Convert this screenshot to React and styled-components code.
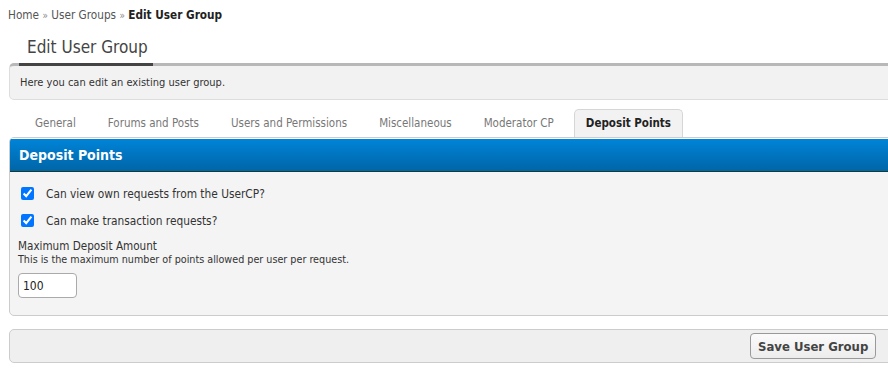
import styled, { createGlobalStyle } from "styled-components";

const GlobalStyle = createGlobalStyle`
    body {
        margin: 0;
        background: #fff;
        font-family: "DejaVu Sans Condensed", "DejaVu Sans", sans-serif;
        color: #333;
        overflow: hidden;
    }
`;

const tabs = [
    "General",
    "Forums and Posts",
    "Users and Permissions",
    "Miscellaneous",
    "Moderator CP",
    "Deposit Points",
];

const App = () => {
    return (
        <>
            <GlobalStyle />
            <Page>
                <Breadcrumb>
                    <a>Home</a> <Sep>»</Sep> <a>User Groups</a> <Sep>»</Sep> <b>Edit User Group</b>
                </Breadcrumb>
                <Heading>Edit User Group</Heading>
                <Description>Here you can edit an existing user group.</Description>

                <TabList>
                    {tabs.map((t) => (
                        <Tab key={t} $active={t === "Deposit Points"}>{t}</Tab>
                    ))}
                </TabList>

                <Panel>
                    <PanelHead>Deposit Points</PanelHead>
                    <PanelBody>
                        <CheckRow>
                            <input type="checkbox" defaultChecked />
                            <span>Can view own requests from the UserCP?</span>
                        </CheckRow>
                        <CheckRow>
                            <input type="checkbox" defaultChecked />
                            <span>Can make transaction requests?</span>
                        </CheckRow>
                        <FieldLabel>Maximum Deposit Amount</FieldLabel>
                        <FieldHint>This is the maximum number of points allowed per user per request.</FieldHint>
                        <NumberInput defaultValue="100" />
                    </PanelBody>
                </Panel>

                <Footer>
                    <SaveButton>Save User Group</SaveButton>
                </Footer>
            </Page>
        </>
    );
}

const Page = styled.div`
    width: 900px;
    padding: 7px 0 0 9px;
`

const Breadcrumb = styled.div`
    font-size: 11.7px;
    line-height: 16px;
    color: #555;
    margin-left: -1px;

    a { color: #555; }
    b { color: #222; }
`

const Sep = styled.span`
    color: #888;
    font-size: 10px;
`

const Heading = styled.h2`
    margin: 8px 0 0 10px;
    padding: 0 8px;
    box-sizing: border-box;
    width: 134px;
    white-space: nowrap;
    font-size: 17px;
    font-weight: normal;
    line-height: 31px;
    color: #444;
    border-bottom: 3px solid #444;
    position: relative;
    z-index: 1;
`

const Description = styled.div`
    margin-top: -3px;
    background: #f2f2f2;
    border: 1px solid #ddd;
    border-top: 3px solid #b8b8b8;
    border-radius: 5px 0 0 5px;
    padding: 0 10px;
    height: 33px;
    line-height: 33px;
    font-size: 11px;
    color: #333;
`

const TabList = styled.div`
    display: flex;
    gap: 8px;
    padding-left: 14px;
    margin-top: 9px;
    position: relative;
    z-index: 1;
`

const Tab = styled.div`
    padding: 0 11px;
    height: 27px;
    line-height: 27px;
    font-size: 11.5px;
    color: ${(p) => (p.$active ? "#222" : "#777")};
    font-weight: ${(p) => (p.$active ? "bold" : "normal")};
    background: ${(p) => (p.$active ? "#f2f2f2" : "transparent")};
    border: 1px solid ${(p) => (p.$active ? "#d6d6d6" : "transparent")};
    border-bottom: none;
    border-radius: 5px 5px 0 0;
`

const Panel = styled.div`
    border: 1px solid #ccc;
    border-radius: 5px 0 0 5px;
    background: #f4f4f4;
    overflow: hidden;
`

const PanelHead = styled.div`
    height: 32px;
    line-height: 32px;
    padding: 0 9px;
    font-size: 14px;
    font-weight: bold;
    color: #fff;
    background: linear-gradient(#0084d8, #0065a7);
    border-top: 1px solid #fff;
    border-bottom: 1px solid #1b3a2c;
`

const PanelBody = styled.div`
    padding: 8px 8px 17px;
`

const CheckRow = styled.label`
    display: flex;
    align-items: center;
    height: 27px;
    font-size: 11.8px;
    color: #333;

    input {
        margin: 0 12px 0 3px;
        width: 13px;
        height: 13px;
    }
`

const FieldLabel = styled.div`
    margin-top: 5px;
    font-size: 11.6px;
    line-height: 14px;
    color: #333;
`

const FieldHint = styled.div`
    font-size: 10.7px;
    line-height: 13px;
    color: #333;
    margin-bottom: 7px;
`

const NumberInput = styled.input`
    width: 59px;
    height: 25px;
    box-sizing: border-box;
    border: 1px solid #aaa;
    border-radius: 4px;
    padding: 0 4px;
    font-size: 12px;
    font-family: inherit;
    color: #222;
    background: #fff;
`

const Footer = styled.div`
    margin-top: 13px;
    height: 32px;
    background: #efefef;
    border: 1px solid #ccc;
    border-radius: 5px 0 0 5px;
    padding-left: 740px;
    display: flex;
    align-items: center;
`

const SaveButton = styled.button`
    height: 26px;
    padding: 0 7px;
    font-family: inherit;
    font-size: 13px;
    font-weight: bold;
    color: #444;
    background: linear-gradient(#fbfbfb, #ececec);
    border: 1px solid #999;
    border-radius: 4px;
`

export default App;
